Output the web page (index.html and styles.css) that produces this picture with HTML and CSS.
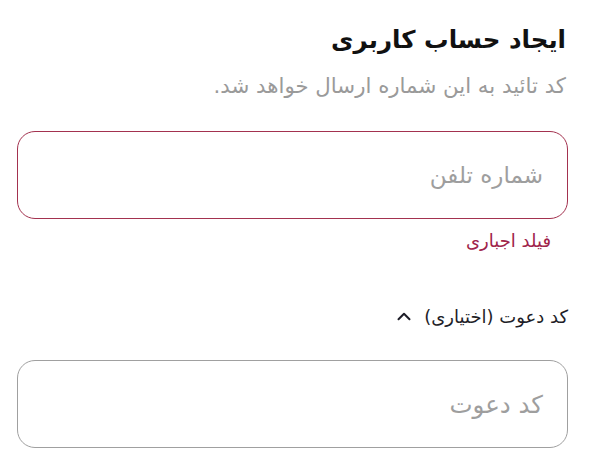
FILE: index.html
```html
<!DOCTYPE html>
<html lang="fa" dir="rtl">
<head>
<meta charset="utf-8">
<link rel="stylesheet" href="styles.css">
</head>
<body>
<main class="page">
  <h1 class="title">ایجاد حساب کاربری</h1>
  <p class="subtitle">کد تائید به این شماره ارسال خواهد شد.</p>
  <div class="field field-error">
    <span class="placeholder">شماره تلفن</span>
  </div>
  <p class="error">فیلد اجباری</p>
  <div class="toggle">
    <span class="toggle-label">کد دعوت (اختیاری)</span>
    <svg class="chevron" width="14" height="10" viewBox="0 0 14 10"><path d="M1.5 8.2 L7 2.7 L12.5 8.2" fill="none" stroke="#1e1e28" stroke-width="2" stroke-linecap="round" stroke-linejoin="round"/></svg>
  </div>
  <div class="field">
    <span class="placeholder placeholder-sm">کد دعوت</span>
  </div>
</main>
</body>
</html>
```
FILE: styles.css
```css
html, body {
  margin: 0;
  background: #ffffff;
}
body {
  font-family: "DejaVu Sans", "Noto Sans Arabic", sans-serif;
  direction: rtl;
}
.page {
  padding: 18px 24px 0 17px;
  display: flex;
  flex-direction: column;
}
.title {
  margin: 0;
  padding-right: 2px;
  font-size: 24.5px;
  font-weight: 700;
  color: #111111;
  line-height: 44px;
}
.subtitle {
  margin: 10px 0 0;
  padding-right: 2px;
  font-size: 21.3px;
  color: #9a9a9a;
  line-height: 28px;
}
.field {
  box-sizing: border-box;
  height: 88px;
  border: 1.5px solid #a0a0a0;
  border-radius: 18px;
  display: flex;
  align-items: center;
  padding-right: 24px;
}
.field-error {
  margin-top: 31px;
  border-color: #a3324f;
}
.placeholder {
  font-size: 23px;
  color: #9e9e9e;
}
.placeholder-sm {
  font-size: 24.5px;
}
.error {
  margin: 8px 0 0;
  padding-right: 17px;
  font-size: 18px;
  color: #a0244a;
  line-height: 28px;
}
.toggle {
  margin-top: 47px;
  display: flex;
  align-items: center;
  gap: 13px;
  height: 28px;
}
.toggle-label {
  font-size: 18px;
  color: #1e1e28;
}
.chevron {
  display: block;
}
.toggle + .field {
  margin-top: 30px;
}
```
